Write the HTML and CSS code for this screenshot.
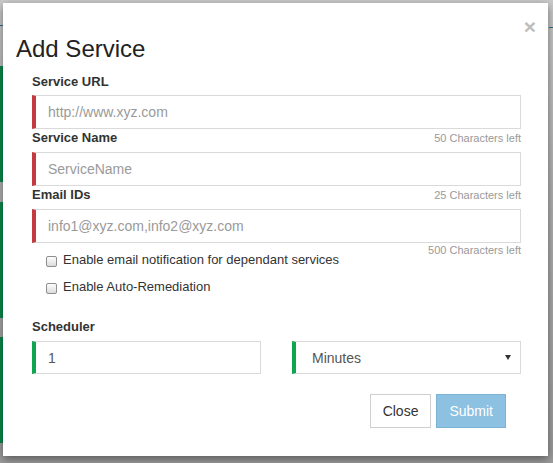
FILE: index.html
```html
<!DOCTYPE html>
<html>
<head>
<meta charset="utf-8">
<title>Add Service</title>
<link rel="stylesheet" href="styles.css">
</head>
<body>
  <div class="edge-left">
    <div class="sp sp-a"></div>
    <div class="mark"></div>
    <div class="sp sp-b"></div>
    <div class="strip strip-1"></div>
    <div class="sp sp-c"></div>
    <div class="strip strip-2"></div>
    <div class="sp sp-d"></div>
    <div class="strip strip-3"></div>
  </div>

  <div class="modal">
    <span class="close">&times;</span>
    <div class="modal-header">
      <h1 class="title">Add Service</h1>
    </div>
    <div class="modal-body">
      <div class="row first">
        <label class="label">Service URL</label>
      </div>
      <input class="field invalid" type="text" placeholder="http://www.xyz.com">

      <div class="row">
        <label class="label">Service Name</label>
        <span class="count">50 Characters left</span>
      </div>
      <input class="field invalid" type="text" placeholder="ServiceName">

      <div class="row">
        <label class="label">Email IDs</label>
        <span class="count">25 Characters left</span>
      </div>
      <input class="field invalid" type="text" placeholder="info1@xyz.com,info2@xyz.com">

      <div class="count-row">
        <span class="count">500 Characters left</span>
      </div>

      <div class="checks">
        <div class="check"><span class="box"></span><span class="check-text">Enable email notification for dependant services</span></div>
        <div class="check"><span class="box"></span><span class="check-text">Enable Auto-Remediation</span></div>
      </div>

      <div class="row sched-label">
        <label class="label">Scheduler</label>
      </div>
      <div class="sched">
        <div class="field valid value">1</div>
        <div class="field valid value select">
          <span>Minutes</span>
          <span class="caret"></span>
        </div>
      </div>
    </div>
    <div class="modal-footer">
      <button class="btn btn-default" type="button">Close</button>
      <button class="btn btn-primary" type="button">Submit</button>
    </div>
  </div>

  <div class="edge-right">
    <div class="mark mark-r"></div>
  </div>
</body>
</html>
```

FILE: styles.css
```css
html, body {
  margin: 0;
  padding: 0;
}

body {
  width: 553px;
  height: 463px;
  overflow: hidden;
  display: flex;
  align-items: flex-start;
  background: linear-gradient(to bottom, #cbcbcb 0, #b2b2b2 40%, #9c9c9c 100%);
  font-family: "Liberation Sans", Arial, sans-serif;
  color: #333;
}

/* background page edges */
.edge-left {
  width: 3px;
  flex: none;
  display: flex;
  flex-direction: column;
}
.sp-a { height: 25px; }
.sp-b { height: 40px; }
.sp-c { height: 20px; }
.sp-d { height: 19px; }
.mark { height: 1px; background: #2c6f8c; }
.strip { background: #0c8a4b; }
.strip-1 { height: 116px; }
.strip-2 { height: 116px; }
.strip-3 { height: 106px; }

.edge-right {
  width: 5px;
  flex: none;
  padding-top: 27px;
}
.mark-r { margin-left: 1px; }

/* modal */
.modal {
  position: relative;
  flex: none;
  margin-top: 3px;
  width: 545px;
  height: 453px;
  background: #fff;
  box-shadow: 0 3px 9px rgba(0, 0, 0, 0.45);
  box-sizing: border-box;
}

.close {
  position: absolute;
  left: 520px;
  top: 17px;
  width: 14px;
  height: 14px;
  display: flex;
  align-items: center;
  justify-content: center;
  font-size: 21px;
  font-weight: bold;
  line-height: 14px;
  color: #bdbdbd;
}

.modal-header {
  padding: 33px 13px 0;
}

.title {
  margin: 0;
  font-size: 24px;
  font-weight: normal;
  line-height: 26px;
  color: #222;
}

.modal-body {
  padding: 11px 27px 0 29px;
}

.row {
  display: flex;
  justify-content: space-between;
  align-items: baseline;
  height: 18px;
  margin-bottom: 5px;
}
.row.first {
  margin-bottom: 4px;
}

.label {
  font-size: 13px;
  font-weight: bold;
  line-height: 18px;
  color: #333;
}

.count {
  font-size: 11px;
  line-height: 15px;
  color: #999;
}

.field {
  display: block;
  box-sizing: border-box;
  width: 100%;
  height: 34px;
  margin: 0;
  padding: 0 12px;
  border: 1px solid #dadada;
  border-radius: 0;
  background: #fff;
  font-family: "Liberation Sans", Arial, sans-serif;
  font-size: 14px;
  color: #555;
  outline: none;
}
.field::placeholder {
  color: #9a9a9a;
}
.invalid {
  border-left: 4px solid #c33b3e;
}
.valid {
  border-left: 4px solid #10a551;
}

.count-row {
  display: flex;
  justify-content: flex-end;
  height: 15px;
}

.checks {
  margin-top: -7px;
  display: flex;
  flex-direction: column;
  gap: 9px;
}

.check {
  display: flex;
  align-items: center;
  height: 18px;
  padding-left: 14px;
}

.box {
  width: 11px;
  height: 11px;
  margin-top: 2px;
  box-sizing: border-box;
  border: 1px solid #8e8e8e;
  border-radius: 2px;
  background: linear-gradient(to bottom, #fdfdfd, #dcdcdc);
  flex: none;
}

.check-text {
  margin-left: 6px;
  font-size: 13px;
  line-height: 18px;
  color: #333;
}

.sched-label {
  margin-top: 22px;
}

.sched {
  display: grid;
  grid-template-columns: 229px 229px;
  column-gap: 31px;
}

.value {
  height: 33px;
  display: flex;
  align-items: center;
  justify-content: space-between;
}

.select {
  padding-left: 16px;
  padding-right: 9px;
}

.caret {
  width: 0;
  height: 0;
  border-left: 3px solid transparent;
  border-right: 3px solid transparent;
  border-top: 5px solid #333;
}

.modal-footer {
  display: flex;
  justify-content: flex-end;
  gap: 5px;
  padding: 20px 42px 0 0;
}

.btn {
  height: 34px;
  padding: 0 12px;
  margin: 0;
  border: 1px solid #ccc;
  border-radius: 0;
  font-family: "Liberation Sans", Arial, sans-serif;
  font-size: 14px;
  line-height: 20px;
}

.btn-default {
  background: #fff;
  color: #333;
  border-color: #cfcfcf;
}

.btn-primary {
  background: #8cc1e1;
  border-color: #7cb2d6;
  color: #fff;
}
```
